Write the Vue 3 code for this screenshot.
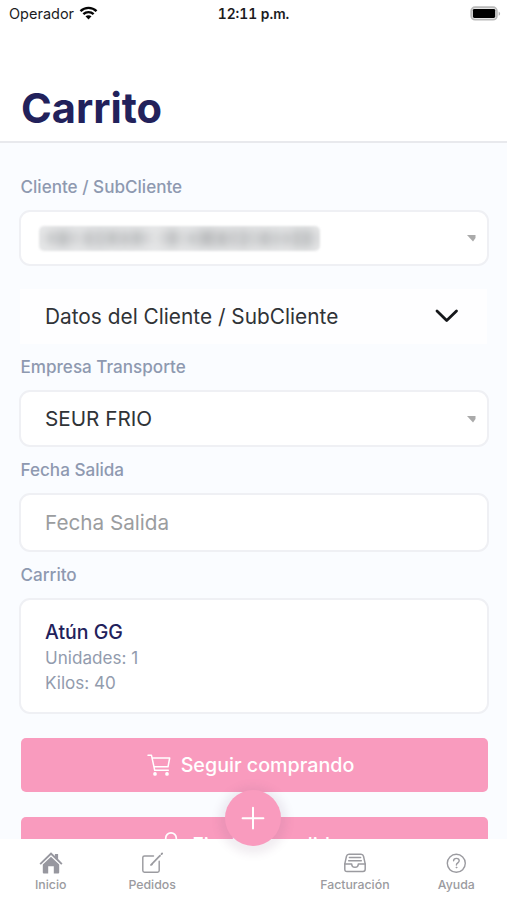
<script setup>
const unidades = 1
const kilos = 40
// Columns of the obscured client name: width, height and grey level per block
const maskBlocks = [
  [8, 6, 0.1], [10, 12, 0.6], [12, 15, 0.75], [8, 12, 0.45], [6, 6, 0.25], [12, 15, 0.6], [10, 17, 0.5], [14, 14, 0.68],
  [12, 13, 0.62], [12, 14, 0.72], [8, 10, 0.42], [8, 5, 0], [8, 12, 0.35], [11, 16, 0.72], [9, 8, 0.3], [12, 13, 0.55],
  [16, 16, 0.8], [14, 15, 0.72], [10, 16, 0.5], [10, 17, 0.62], [9, 14, 0.4], [14, 15, 0.66], [9, 13, 0.5], [12, 13, 0.5],
  [9, 17, 0.68], [10, 17, 0.72], [7, 10, 0.3],
]
</script>

<template>
  <div class="screen">
    <div class="status">
      <div class="carrier">
        <span>Operador</span>
        <svg class="wifi" viewBox="0 0 20 15">
          <path d="M1.4 5.5C6.2.8 13.8.8 18.6 5.5M4.5 8.8c3.1-3 7.9-3 11 0" fill="none" stroke="#050505" stroke-width="2.5" />
          <path d="M10 14.4 6.8 11.1c1.8-1.7 4.6-1.7 6.4 0z" fill="#050505" />
        </svg>
      </div>
      <div class="time">12:11 p.m.</div>
      <div class="power">
        <svg class="battery" viewBox="0 0 32 16">
          <rect x="1.2" y="1.2" width="26.6" height="13" rx="4" fill="#e6e6e6" stroke="#b9b9b9" stroke-width="1.7" />
          <rect x="3" y="3" width="23" height="9.4" rx="1.5" fill="#000" />
          <path d="M29.6 5.6c2 .8 2 3.6 0 4.4z" fill="#b0b0b0" />
        </svg>
      </div>
    </div>

    <header class="header"><h1>Carrito</h1></header>

    <main class="content">
      <div class="label first">Cliente / SubCliente</div>
      <div class="field client">
        <div class="mask">
          <i v-for="(b, i) in maskBlocks" :key="i" :style="{ width: b[0] + 'px', height: b[1] + 'px', opacity: b[2] }"></i>
        </div>
        <svg class="caret" viewBox="0 0 9 7"><path d="M0 0h8.5v3L6 6.500z" fill="#aaa" /></svg>
      </div>

      <div class="accordion">
        <span>Datos del Cliente / SubCliente</span>
        <svg class="chevron" viewBox="0 0 24 14"><path d="M2 2l9.7 9.5L21.5 2" fill="none" stroke="#15171a" stroke-width="2.8" stroke-linecap="round" stroke-linejoin="round" /></svg>
      </div>

      <div class="label">Empresa Transporte</div>
      <div class="field">
        <span>SEUR FRIO</span>
        <svg class="caret" viewBox="0 0 9 7"><path d="M0 0h8.5v3L6 6.500z" fill="#aaa" /></svg>
      </div>

      <div class="label">Fecha Salida</div>
      <div class="field date"><span>Fecha Salida</span></div>

      <div class="label">Carrito</div>
      <div class="item">
        <div class="name">Atún GG</div>
        <div class="detail">Unidades: {{ unidades }}</div>
        <div class="detail">Kilos: {{ kilos }}</div>
      </div>

      <button class="action">
        <svg class="cart" viewBox="0 0 24 22" fill="none" stroke="#fff" stroke-width="1.5" stroke-linejoin="round" stroke-linecap="round">
          <path d="M1 1.300h3.500l3.200 15h13.600M5.200 4h17.500l-1.700 8.800H7" />
          <circle cx="8" cy="19.9" r="1.1" fill="#fff" />
          <circle cx="20" cy="19.9" r="1.1" fill="#fff" />
        </svg>
        <span>Seguir comprando</span>
      </button>
      <button class="action second">
        <svg class="lock" viewBox="0 0 18 24" fill="none" stroke="#fff" stroke-width="1.7">
          <path d="M3.700 10V6.200a5.300 5.300 0 0 1 10.600 0V10" />
          <rect x="1.5" y="10" width="15" height="12" rx="2" />
        </svg>
        <span>Finalizar pedido</span>
      </button>
    </main>

    <nav class="tabs">
      <div class="tab">
        <svg viewBox="0 0 24 24" fill="#97979f">
          <path d="M12 1.200 15.900 5V3h3.200v5.100l4.400 4.300-1.300 1.300L12 3.900 1.800 13.700.5 12.400z" />
          <path d="M12 5.800 20.200 13.600V21.500q0 1-1 1h-4.400v-7.300H9.200v7.300H4.800q-1 0-1-1v-7.900z" />
        </svg>
        <span>Inicio</span>
      </div>
      <div class="tab">
        <svg viewBox="0 0 24 24" fill="none" stroke="#9b9ba0" stroke-width="1.45" stroke-linecap="round" stroke-linejoin="round">
          <path d="M13.500 4.900H4.500q-1.700 0-1.700 1.700v13q0 1.700 1.700 1.700h13q1.700 0 1.700-1.700v-9.400" />
          <path d="M11.500 13.300 20 4.700" stroke-width="1.7" />
          <path d="M21.500 3.100l.6-.6" stroke-width="1.9" />
          <path d="M10.800 14l1.300-.4" />
        </svg>
        <span>Pedidos</span>
      </div>
      <div class="tab"></div>
      <div class="tab">
        <svg viewBox="0 0 24 24" fill="none" stroke="#9b9ba0" stroke-width="1.5" stroke-linecap="round" stroke-linejoin="round">
          <path d="M1.800 12.900 3.500 5.200Q4 3.200 6 3.200h12q2 0 2.500 2l1.700 7.700v5.400q0 2.200-2.200 2.200H4q-2.200 0-2.200-2.200z" />
          <path d="M1.800 12.900h6.900c0 4.400 6.600 4.400 6.600 0h6.900M6.400 6.500h11.200M5.700 9.700h12.600" />
        </svg>
        <span>Facturación</span>
      </div>
      <div class="tab">
        <svg viewBox="0 0 24 24" fill="none" stroke="#9b9ba0" stroke-width="1.4" stroke-linecap="round" stroke-linejoin="round">
          <circle cx="12.3" cy="12.3" r="9" />
          <path d="M9.600 9.800c.1-3.300 5.600-3.300 5.600 0 0 2-2.800 2.200-2.800 4.200" />
          <circle cx="12.4" cy="16.5" r=".5" fill="#9b9ba0" stroke-width=".8" />
        </svg>
        <span>Ayuda</span>
      </div>
    </nav>

    <button class="fab">
      <svg viewBox="0 0 24 24"><path d="M12 1.800v20.800M1.600 12.200h20.800" stroke="#fff" stroke-width="2" stroke-linecap="round" /></svg>
    </button>
  </div>
</template>

<style>
body { margin: 0; overflow: hidden; }
</style>

<style scoped>
.screen {
  position: relative;
  width: 507px;
  height: 900px;
  display: flex;
  flex-direction: column;
  overflow: hidden;
  background: #fff;
  font-family: Inter, sans-serif;
}
.screen, .screen * { box-sizing: border-box; }
svg { display: block; flex: none; }
.status {
  display: grid;
  grid-template-columns: 1fr auto 1fr;
  align-items: center;
  height: 28px;
  padding: 0 6px 0 9px;
  color: #1c1c1e;
  font-size: 14.5px;
  line-height: 20px;
}
.carrier { display: flex; align-items: center; gap: 5px; }
.wifi { width: 19px; height: 14px; margin-top: -2px; }
.time { margin-right: 3px; font-weight: 600; font-size: 13.8px; font-feature-settings: "tnum"; }
.power { display: flex; justify-content: flex-end; }
.battery { width: 31px; height: 15.5px; margin-top: -1px; }
.header {
  height: 115px;
  padding: 54px 21px 0;
  border-bottom: 2px solid #e8e9ed;
}
h1 {
  margin: 0;
  color: #22215b;
  font-size: 41.6px;
  line-height: 53px;
  font-weight: 700;
}
.content {
  flex: 1;
  min-height: 0;
  overflow: hidden;
  padding: 0 19px;
  background: #fafcff;
}
.label {
  margin: 11px 0 11px 1.5px;
  height: 24px;
  line-height: 24px;
  color: #8e99b0;
  font-size: 17.1px;
  font-weight: 500;
}
.first { margin-top: 0; padding-top: 32px; height: 56px; }
.field {
  display: flex;
  align-items: center;
  justify-content: space-between;
  width: 470px;
  height: 57px;
  padding: 0 11px 0 24px;
  border: 2px solid #eff0f4;
  border-radius: 11px;
  background: #fff;
  color: #303337;
  font-size: 20.7px;
}
.client { height: 56px; padding-left: 18px; }
.date { height: 59px; color: #9b9d9f; }
.caret { width: 9px; height: 7px; margin-top: 1px; }
.mask {
  display: flex;
  width: 281px;
  height: 25px;
  border-radius: 5px;
  background: #e6e7e8;
  overflow: hidden;
  align-items: center;
  filter: blur(0.8px);
}
.mask i { flex: none; background: #b0b2b4; filter: blur(4px); }
.accordion {
  display: flex;
  align-items: center;
  justify-content: space-between;
  height: 55px;
  margin: 23px 1px 0;
  padding: 0 28px 0 25px;
  background: #fefeff;
  color: #303337;
  font-size: 20.85px;
}
.chevron { width: 24px; height: 14px; margin-top: -1px; }
.item {
  width: 470px;
  height: 116px;
  padding: 19px 24px 0;
  border: 2px solid #eff0f4;
  border-radius: 11px;
  background: #fff;
}
.name { color: #22215b; font-size: 19.5px; font-weight: 500; line-height: 26px; }
.detail { color: #929bad; font-size: 17.1px; line-height: 24.5px; }
.detail:nth-child(2) { margin-top: 1px; }
.action {
  display: flex;
  align-items: center;
  justify-content: center;
  gap: 10px;
  width: 467px;
  height: 54px;
  margin: 24px 0 0 1.5px;
  padding: 0 7px 0 0;
  border: 0;
  border-radius: 5px;
  background: #f99bbe;
  color: #fff;
  font: 500 19.7px Inter, sans-serif;
}
.second { margin-top: 25px; padding: 0 4px 0 0; gap: 12px; }
.second span { margin-top: 2px; }
.cart { width: 24px; height: 22px; }
.lock { width: 18px; height: 24px; }
.tabs {
  display: grid;
  grid-template-columns: repeat(5, 1fr);
  height: 61px;
  background: #fff;
}
.tab {
  display: flex;
  flex-direction: column;
  align-items: center;
  gap: 1px;
  padding-top: 12px;
  color: #9b9ba0;
  font-size: 12.3px;
  font-weight: 500;
  line-height: 18px;
}
.tab svg { width: 24px; height: 24px; }
.fab {
  position: absolute;
  left: 225px;
  top: 790px;
  width: 56px;
  height: 56px;
  padding: 0;
  border: 0;
  border-radius: 50%;
  display: flex;
  align-items: center;
  justify-content: center;
  background: #f99bbe;
  box-shadow: 0 2px 8px 6px rgba(130, 90, 125, 0.11);
}
.fab svg { width: 24px; height: 24px; }
</style>
